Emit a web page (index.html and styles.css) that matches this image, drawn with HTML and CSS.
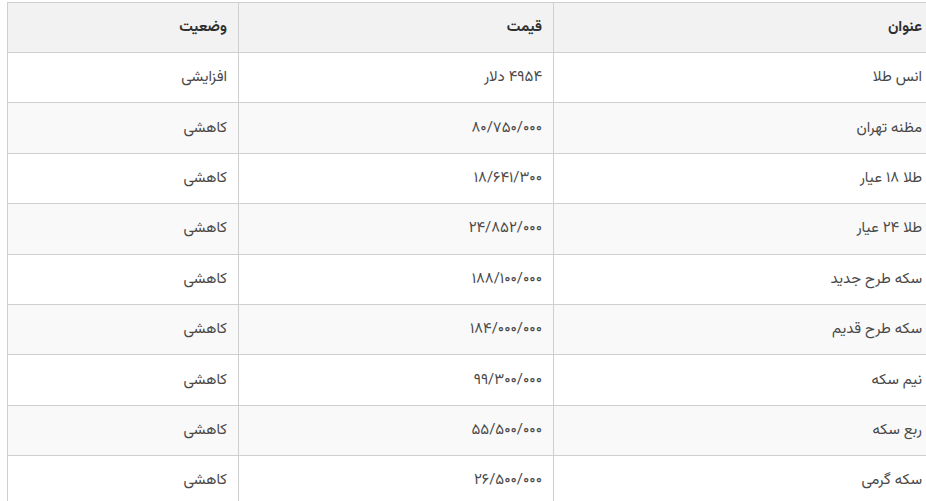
FILE: index.html
```html
<!DOCTYPE html>
<html lang="fa">
<head>
<meta charset="utf-8">
<link rel="stylesheet" href="styles.css">
</head>
<body>
<div class="wrap">
<table class="prices" dir="rtl">
  <colgroup>
    <col class="c-title">
    <col class="c-price">
    <col class="c-state">
  </colgroup>
  <thead>
    <tr><th>عنوان</th><th>قیمت</th><th>وضعیت</th></tr>
  </thead>
  <tbody>
    <tr><td>انس طلا</td><td>۴۹۵۴ دلار</td><td>افزایشی</td></tr>
    <tr><td>مظنه تهران</td><td>۸۰/۷۵۰/۰۰۰</td><td>کاهشی</td></tr>
    <tr><td>طلا ۱۸ عیار</td><td>۱۸/۶۴۱/۳۰۰</td><td>کاهشی</td></tr>
    <tr><td>طلا ۲۴ عیار</td><td>۲۴/۸۵۲/۰۰۰</td><td>کاهشی</td></tr>
    <tr><td>سکه طرح جدید</td><td>۱۸۸/۱۰۰/۰۰۰</td><td>کاهشی</td></tr>
    <tr><td>سکه طرح قدیم</td><td>۱۸۴/۰۰۰/۰۰۰</td><td>کاهشی</td></tr>
    <tr><td>نیم سکه</td><td>۹۹/۳۰۰/۰۰۰</td><td>کاهشی</td></tr>
    <tr><td>ربع سکه</td><td>۵۵/۵۰۰/۰۰۰</td><td>کاهشی</td></tr>
    <tr><td>سکه گرمی</td><td>۲۶/۵۰۰/۰۰۰</td><td>کاهشی</td></tr>
  </tbody>
</table>
</div>
</body>
</html>
```
FILE: styles.css
```css
html, body {
  margin: 0;
  padding: 0;
  overflow: hidden;
  background: #fff;
}
.wrap {
  padding: 2px 0 0 7px;
  width: 940px;
}
.prices {
  width: 926px;
  border-collapse: collapse;
  table-layout: fixed;
  font-family: "Vazir", "Vazirmatn", "Noto Sans Arabic", "DejaVu Sans", sans-serif;
  font-size: 15px;
  color: #484848;
}
.c-title { width: 380px; }
.c-price { width: 315px; }
.c-state { width: 231px; }
.prices th,
.prices td {
  border: 1px solid #cfcfcf;
  padding: 0 11px;
  text-align: right;
  height: 50.4px;
  box-sizing: border-box;
}
.prices th {
  background: #f2f2f2;
  color: #2f2f2f;
  font-weight: bold;
  height: 50px;
}
.prices tbody tr:nth-child(even) td {
  background: #f9f9f9;
}
```
